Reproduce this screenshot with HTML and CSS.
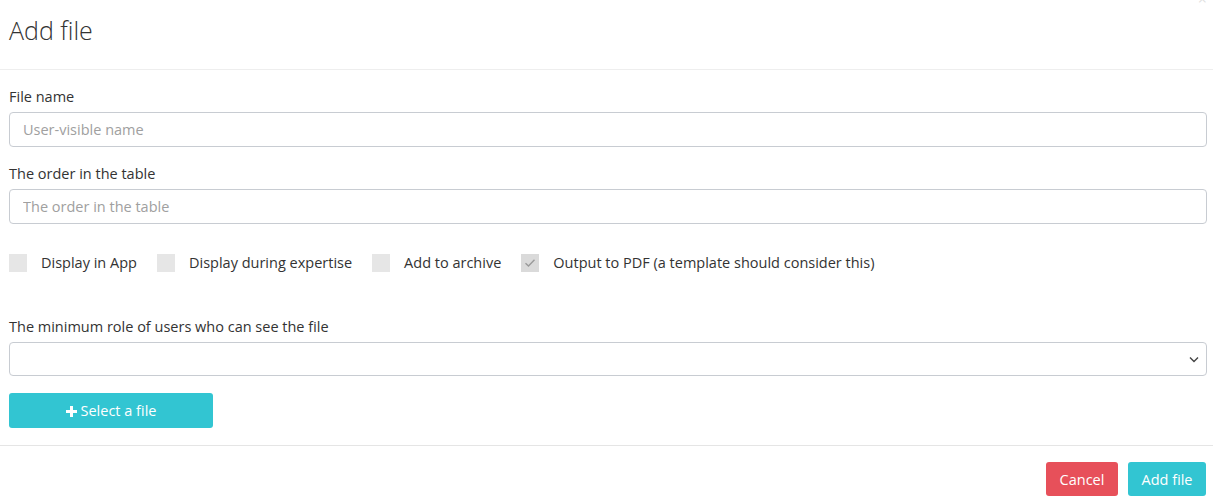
FILE: index.html
```html
<!DOCTYPE html>
<html>
<head>
<meta charset="utf-8">
<link rel="stylesheet" href="styles.css">
</head>
<body>
<div class="modal">
  <button class="close" type="button">×</button>
  <div class="modal-header">
    <h4 class="modal-title">Add file</h4>
  </div>
  <div class="modal-body">
    <div class="form-group">
      <label class="label">File name</label>
      <input class="input" type="text" placeholder="User-visible name">
    </div>
    <div class="form-group">
      <label class="label">The order in the table</label>
      <input class="input" type="text" placeholder="The order in the table">
    </div>
    <div class="checks">
      <label class="check"><span class="box"></span>Display in App</label>
      <label class="check"><span class="box"></span>Display during expertise</label>
      <label class="check"><span class="box"></span>Add to archive</label>
      <label class="check"><span class="box checked"><svg width="12" height="10" viewBox="0 0 12 10"><path d="M1.5 5.2 L4.5 8 L10.5 1.8" fill="none" stroke="#9a9a9a" stroke-width="1.4"/></svg></span>Output to PDF (a template should consider this)</label>
    </div>
    <div class="form-group role">
      <label class="label">The minimum role of users who can see the file</label>
      <div class="select">
        <svg class="chev" width="10" height="7" viewBox="0 0 10 7"><path d="M1 1.5 L5 5.5 L9 1.5" fill="none" stroke="#444" stroke-width="1.4"/></svg>
      </div>
    </div>
    <button class="btn btn-teal btn-select" type="button"><svg class="plus" width="11" height="11" viewBox="0 0 11 11"><path d="M4 0h3v4h4v3H7v4H4V7H0V4h4z" fill="#fff"/></svg>Select a file</button>
  </div>
  <div class="modal-footer">
    <button class="btn btn-red" type="button">Cancel</button>
    <button class="btn btn-teal" type="button">Add file</button>
  </div>
</div>
</body>
</html>
```

FILE: styles.css
```css
* { box-sizing: border-box; }
html, body { margin: 0; padding: 0; background: #fff; }
body {
  font-family: "Open Sans", "Noto Sans", sans-serif;
  font-size: 14.5px;
  color: #333;
}
.modal { position: relative; width: 1213px; height: 502px; overflow: hidden; }
.close {
  position: absolute;
  right: 6px;
  top: -9px;
  border: 0;
  background: none;
  font-size: 16px;
  line-height: 16px;
  color: #000;
  opacity: 0.12;
  padding: 0;
  font-family: "Open Sans", sans-serif;
}
.modal-header {
  height: 70px;
  border-bottom: 1px solid #eeeeee;
  padding: 13px 9px 0;
}
.modal-title {
  margin: 0;
  font-size: 25px;
  font-weight: 300;
  line-height: 34px;
  color: #333;
}
.modal-body { padding: 17px 6px 0 9px; }
.form-group { display: flex; flex-direction: column; margin-bottom: 17px; }
.label { display: block; line-height: 20px; margin-bottom: 5px; color: #333; }
.input {
  height: 35px;
  border: 1px solid #c8ccd2;
  border-radius: 4px;
  padding: 0 13px;
  font-family: inherit;
  font-size: 14.5px;
  color: #555;
  outline: none;
}
.input::placeholder { color: #a0a0a0; }
.checks { display: flex; gap: 20px; margin-top: 29px; height: 20px; align-items: center; }
.check { display: flex; align-items: center; gap: 14px; line-height: 20px; color: #333; }
.box {
  width: 18px; height: 18px;
  background: #e6e6e6;
  display: flex; align-items: center; justify-content: center;
}
.box.checked { background: #dadada; }
.role { margin-top: 44px; }
.select {
  height: 34px;
  border: 1px solid #c8ccd2;
  border-radius: 4px;
  display: flex; align-items: center; justify-content: flex-end;
  padding-right: 7px;
}
.btn {
  border: 0;
  border-radius: 3px;
  color: #fff;
  font-family: inherit;
  font-size: 14.5px;
  height: 34px;
  padding: 0;
  white-space: nowrap;
  display: inline-flex; align-items: center; justify-content: center;
}
.btn-teal { background: #32c5d2; }
.btn-red { background: #e7505a; }
.btn-select { width: 204px; height: 35px; gap: 4px; }
.plus { margin-top: 1px; }
.modal-footer {
  margin-top: 17px;
  border-top: 1px solid #e5e5e5;
  padding: 16px 7px 0 0;
  display: flex; justify-content: flex-end; gap: 10px;
}
.modal-footer .btn-red { width: 72px; }
.modal-footer .btn-teal { width: 78px; }
```
